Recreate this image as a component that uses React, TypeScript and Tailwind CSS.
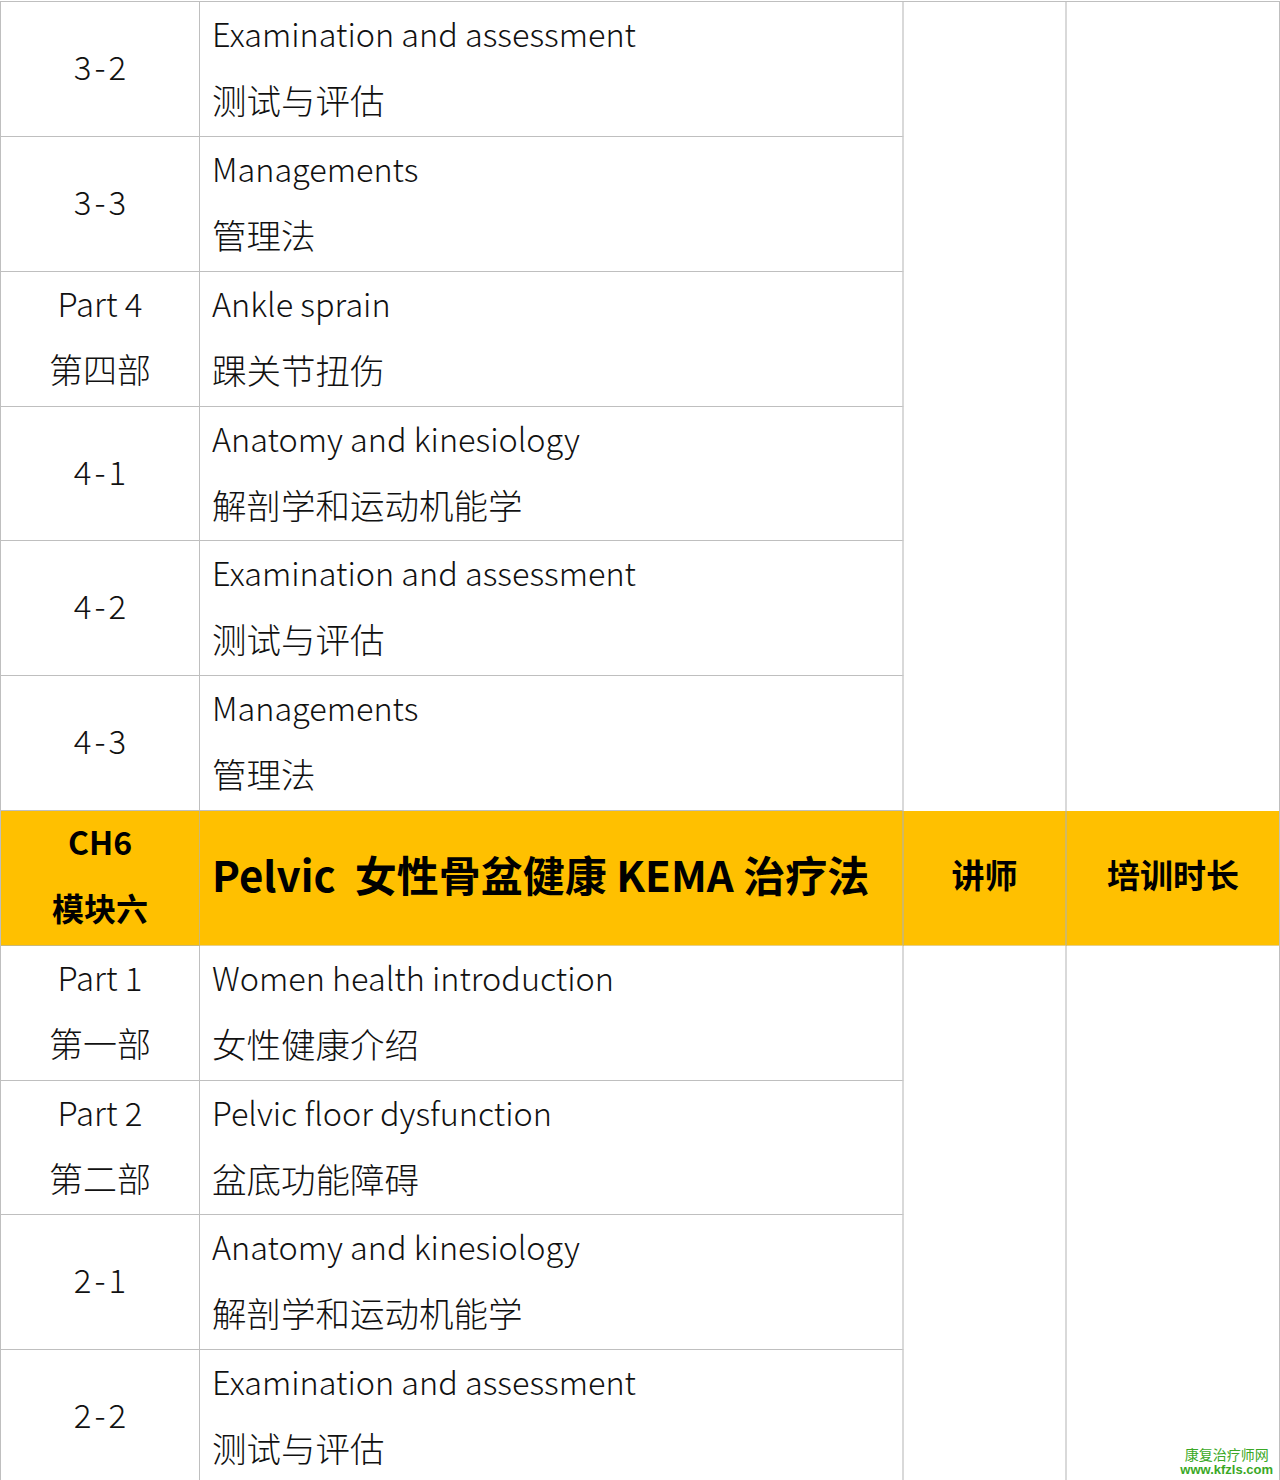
import React from "react";

const FONT = '"Noto Sans CJK SC", "Noto Sans", sans-serif';

type Row = { a: string[]; b: string[]; short?: boolean };

const top: Row[] = [
  { a: ["3-2"], b: ["Examination and assessment", "测试与评估"] },
  { a: ["3-3"], b: ["Managements", "管理法"] },
  { a: ["Part 4", "第四部"], b: ["Ankle sprain", "踝关节扭伤"] },
  { a: ["4-1"], b: ["Anatomy and kinesiology", "解剖学和运动机能学"], short: true },
  { a: ["4-2"], b: ["Examination and assessment", "测试与评估"] },
  { a: ["4-3"], b: ["Managements", "管理法"] },
];

const bottom: Row[] = [
  { a: ["Part 1", "第一部"], b: ["Women health introduction", "女性健康介绍"] },
  { a: ["Part 2", "第二部"], b: ["Pelvic floor dysfunction", "盆底功能障碍"], short: true },
  { a: ["2-1"], b: ["Anatomy and kinesiology", "解剖学和运动机能学"] },
  { a: ["2-2"], b: ["Examination and assessment", "测试与评估"] },
];

const isCode = (s: string) => /^\d-\d$/.test(s);
const isCjk = (s: string) => /[\u4e00-\u9fff]/.test(s);

function BodyRows({ rows }: { rows: Row[] }) {
  return (
    <>
      {rows.map((r, i) => (
        <React.Fragment key={i}>
          <div
            className={
              (r.short ? "h-[134px] " : "h-[135px] ") +
              "col-start-1 border-r border-b border-[#bfbfbf] flex flex-col items-center justify-center pb-[6px] leading-[66px] font-light text-[#111]"
            }
          >
            {r.a.map((t, j) => (
              <div
                key={j}
                className={
                  isCode(t)
                    ? "text-[33px] tracking-[3px] pl-[3px]"
                    : isCjk(t)
                    ? "text-[34px]"
                    : "text-[33px]"
                }
              >
                {t}
              </div>
            ))}
          </div>
          <div
            className={
              (r.short ? "h-[134px] " : "h-[135px] ") +
              "col-start-2 border-r-2 border-r-[#d9d9d9] border-b border-b-[#bfbfbf] pl-[12px] font-light text-[#111]"
            }
          >
            <div className="-mt-[2px] leading-[66px]">
              {r.b.map((t, j) => (
                <div key={j} className={"whitespace-nowrap " + (isCjk(t) ? "text-[34.5px]" : "text-[32.4px]")}>
                  {t}
                </div>
              ))}
            </div>
          </div>
        </React.Fragment>
      ))}
    </>
  );
}

export default function App() {
  return (
    <div className="relative w-[1280px] h-[1480px] overflow-hidden bg-white pt-px" style={{ fontFamily: FONT }}>
      <div className="w-[1280px] border-l border-t border-[#bfbfbf] grid grid-cols-[199px_704px_163px_213px]">
        <BodyRows rows={top} />
        <div className="col-start-3 row-start-1 row-span-6 border-r-2 border-r-[#d9d9d9]" />
        <div className="col-start-4 row-start-1 row-span-6 border-r border-r-[#bfbfbf]" />

        <div className="col-start-1 h-[135px] bg-[#ffc000] border-r border-b border-[#c9b87a] flex flex-col items-center justify-center pb-[8px] text-[32px] leading-[66px] font-bold text-black">
          <div>CH6</div>
          <div>模块六</div>
        </div>
        <div className="col-start-2 h-[135px] bg-[#ffc000] border-r-2 border-r-[#d2b860] border-b border-b-[#e6cf8a] pl-[12px] pb-[9px] flex items-center text-[42px] font-bold text-black whitespace-nowrap">
          Pelvic&nbsp; 女性骨盆健康 KEMA 治疗法
        </div>
        <div className="col-start-3 h-[135px] bg-[#ffc000] border-r-2 border-r-[#d2b860] border-b border-b-[#e6cf8a] pb-[6px] flex items-center justify-center text-[33px] font-bold text-black">
          讲师
        </div>
        <div className="col-start-4 h-[135px] bg-[#ffc000] border-r border-r-[#bfbfbf] border-b border-b-[#e6cf8a] pb-[6px] flex items-center justify-center text-[33px] font-bold text-black">
          培训时长
        </div>

        <BodyRows rows={bottom} />
        <div className="col-start-3 row-start-8 row-span-4 border-r-2 border-r-[#d9d9d9]" />
        <div className="col-start-4 row-start-8 row-span-4 border-r border-r-[#bfbfbf]" />
      </div>

      <div
        className="absolute right-[7px] bottom-[4px] flex flex-col items-center text-[#3aa826] leading-none"
        style={{ fontFamily: '"Liberation Sans", "Noto Sans CJK SC", sans-serif' }}
      >
        <div className="text-[14px] leading-[16px]">康复治疗师网</div>
        <div className="text-[13px] font-bold leading-[13px]">www.kfzls.com</div>
      </div>
    </div>
  );
}
